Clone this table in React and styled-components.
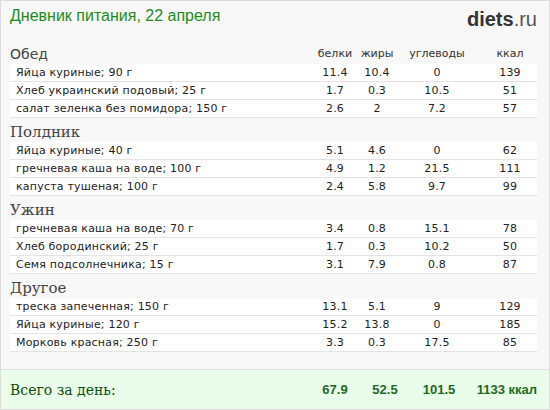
import React from 'react'
import styled, { createGlobalStyle } from 'styled-components';

const Global = createGlobalStyle`
  html, body { margin: 0; padding: 0; background: #fff; }
  * { box-sizing: border-box; }
`

const Page = styled.div`
  width: 550px;
  height: 410px;
  border: 1px solid #dcdcdc;
  background: #f8f8f8;
  display: flex;
  flex-direction: column;
  font-family: "DejaVu Sans", Verdana, sans-serif;
`

const Content = styled.div`
  padding: 0 12px 0 9px;
`

const TopBar = styled.div`
  height: 39px;
  display: flex;
  justify-content: space-between;
  align-items: flex-start;
  .title{
    margin-top: 6px;
    font-family: "Liberation Sans", Arial, sans-serif;
    font-size: 16px;
    color: #1d8c1d;
  }
  .logo{
    margin-top: 7px;
    font-family: "Liberation Sans", Arial, sans-serif;
    font-size: 20px;
    color: #333;
    b{ font-weight: bold; }
    span{ color: #555; }
  }
`

const Head = styled.div`
  height: 24px;
  display: grid;
  grid-template-columns: 1fr 44px 40px 80px 60px;
  align-items: end;
  h3{
    margin: 0;
    font-weight: normal;
    font-size: ${p => p.$sans ? '14px' : '15px'};
    font-family: ${p => p.$sans ? '"DejaVu Sans", Verdana, sans-serif' : '"DejaVu Serif", Georgia, serif'};
    color: #444;
    line-height: 18px;
    padding-bottom: 1px;
  }
  .col{
    text-align: center;
    font-size: 11px;
    color: #333;
    padding-bottom: 4px;
  }
  .col.last{ padding-left: 6px; }
`

const Row = styled.div`
  height: 18px;
  background: #fff;
  border-bottom: 1px solid #e4e4e4;
  display: grid;
  grid-template-columns: 1fr 44px 40px 80px 60px;
  align-items: center;
  font-size: 11px;
  color: #222;
  letter-spacing: 0.2px;
  .name{ padding-left: 6px; white-space: nowrap; }
  .num{ text-align: center; }
  .num.last{ padding-left: 6px; }
`

const Total = styled.div`
  margin-top: auto;
  height: 40px;
  border-top: 1px solid #dedede;
  background: #eafdea;
  padding: 0 12px 0 9px;
  display: grid;
  grid-template-columns: 1fr 44px 56px 52px 72px;
  align-items: center;
  .label{
    font-family: "DejaVu Serif", Georgia, serif;
    font-size: 14px;
    color: #0d4f0d;
  }
  .num{
    text-align: center;
    font-family: "Liberation Sans", Arial, sans-serif;
    font-weight: bold;
    font-size: 13px;
    color: #1e6b1e;
  }
  .num.last{ text-align: right; }
`

const meals = [
  { title: 'Обед', sans: true, items: [
    ['Яйца куриные; 90 г', '11.4', '10.4', '0', '139'],
    ['Хлеб украинский подовый; 25 г', '1.7', '0.3', '10.5', '51'],
    ['салат зеленка без помидора; 150 г', '2.6', '2', '7.2', '57'],
  ]},
  { title: 'Полдник', items: [
    ['Яйца куриные; 40 г', '5.1', '4.6', '0', '62'],
    ['гречневая каша на воде; 100 г', '4.9', '1.2', '21.5', '111'],
    ['капуста тушеная; 100 г', '2.4', '5.8', '9.7', '99'],
  ]},
  { title: 'Ужин', items: [
    ['гречневая каша на воде; 70 г', '3.4', '0.8', '15.1', '78'],
    ['Хлеб бородинский; 25 г', '1.7', '0.3', '10.2', '50'],
    ['Семя подсолнечника; 15 г', '3.1', '7.9', '0.8', '87'],
  ]},
  { title: 'Другое', items: [
    ['треска запеченная; 150 г', '13.1', '5.1', '9', '129'],
    ['Яйца куриные; 120 г', '15.2', '13.8', '0', '185'],
    ['Морковь красная; 250 г', '3.3', '0.3', '17.5', '85'],
  ]},
]

export default function App() {
  return (
    <Page>
      <Global />
      <Content>
        <TopBar>
          <div className='title'>Дневник питания, 22 апреля</div>
          <div className='logo'><b>diets</b><span>.ru</span></div>
        </TopBar>
        {meals.map((m, i) => (
          <div key={m.title}>
            <Head $sans={m.sans}>
              <h3>{m.title}</h3>
              {i === 0 && <>
                <div className='col'>белки</div>
                <div className='col'>жиры</div>
                <div className='col'>углеводы</div>
                <div className='col last'>ккал</div>
              </>}
            </Head>
            {m.items.map(r => (
              <Row key={r[0]}>
                <div className='name'>{r[0]}</div>
                <div className='num'>{r[1]}</div>
                <div className='num'>{r[2]}</div>
                <div className='num'>{r[3]}</div>
                <div className='num last'>{r[4]}</div>
              </Row>
            ))}
          </div>
        ))}
      </Content>
      <Total>
        <div className='label'>Всего за день:</div>
        <div className='num'>67.9</div>
        <div className='num'>52.5</div>
        <div className='num'>101.5</div>
        <div className='num last'>1133 ккал</div>
      </Total>
    </Page>
  )
}
